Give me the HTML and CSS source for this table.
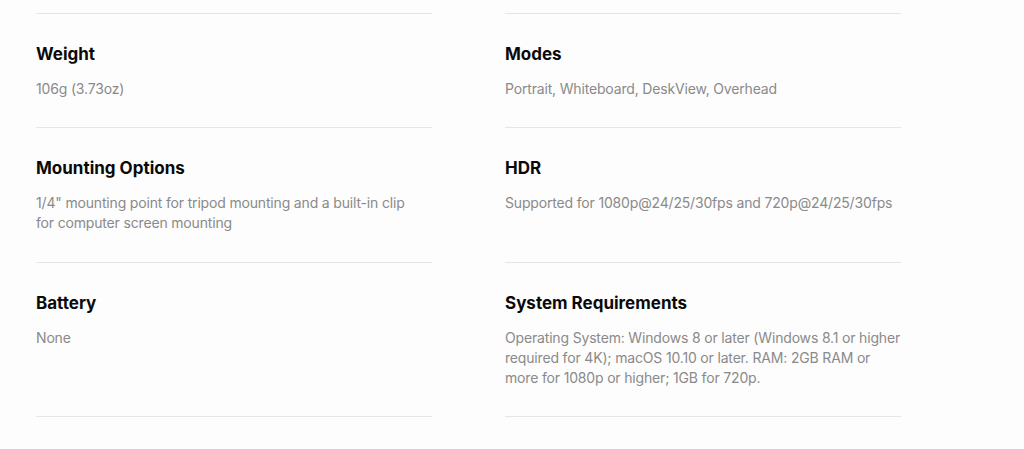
FILE: index.html
```html
<!DOCTYPE html>
<html lang="en">
<head>
<meta charset="utf-8">
<title>Specs</title>
<link rel="stylesheet" href="styles.css">
</head>
<body>
<section class="specs">
  <div class="spec first">
    <h3 class="spec-title">Weight</h3>
    <p class="spec-value">106g (3.73oz)</p>
  </div>
  <div class="spec first">
    <h3 class="spec-title">Modes</h3>
    <p class="spec-value">Portrait, Whiteboard, DeskView, Overhead</p>
  </div>
  <div class="spec">
    <h3 class="spec-title">Mounting Options</h3>
    <p class="spec-value">1/4" mounting point for tripod mounting and a built-in clip for&nbsp;computer screen mounting</p>
  </div>
  <div class="spec">
    <h3 class="spec-title">HDR</h3>
    <p class="spec-value">Supported for 1080p@24/25/30fps and 720p@24/25/30fps</p>
  </div>
  <div class="spec last">
    <h3 class="spec-title">Battery</h3>
    <p class="spec-value">None</p>
  </div>
  <div class="spec last">
    <h3 class="spec-title">System Requirements</h3>
    <p class="spec-value">Operating System: Windows 8 or later (Windows 8.1 or higher required for 4K); macOS 10.10 or later. RAM: 2GB RAM or more for 1080p or higher; 1GB for 720p.</p>
  </div>
</section>
</body>
</html>
```

FILE: styles.css
```css
html, body {
  margin: 0;
  padding: 0;
  background: #fdfdfd;
}
body {
  font-family: "Inter", "Noto Sans", sans-serif;
  color: #000;
}
.specs {
  display: grid;
  grid-template-columns: 396px 396px;
  column-gap: 73px;
  padding: 13px 0 0 36px;
}
.spec {
  border-bottom: 1px solid #e6e6e6;
  padding: 28px 0 29px;
}
.spec.first {
  border-top: 1px solid #e6e6e6;
  padding-bottom: 28px;
}
.spec.last {
  padding-bottom: 28px;
}
.spec-title {
  margin: 0 0 13px;
  font-size: 17px;
  line-height: 24px;
  font-weight: 700;
  color: #0a0a0a;
}
.spec-value {
  margin: 0;
  font-size: 14px;
  line-height: 20px;
  letter-spacing: -0.17px;
  color: #8a8a8a;
}
```
